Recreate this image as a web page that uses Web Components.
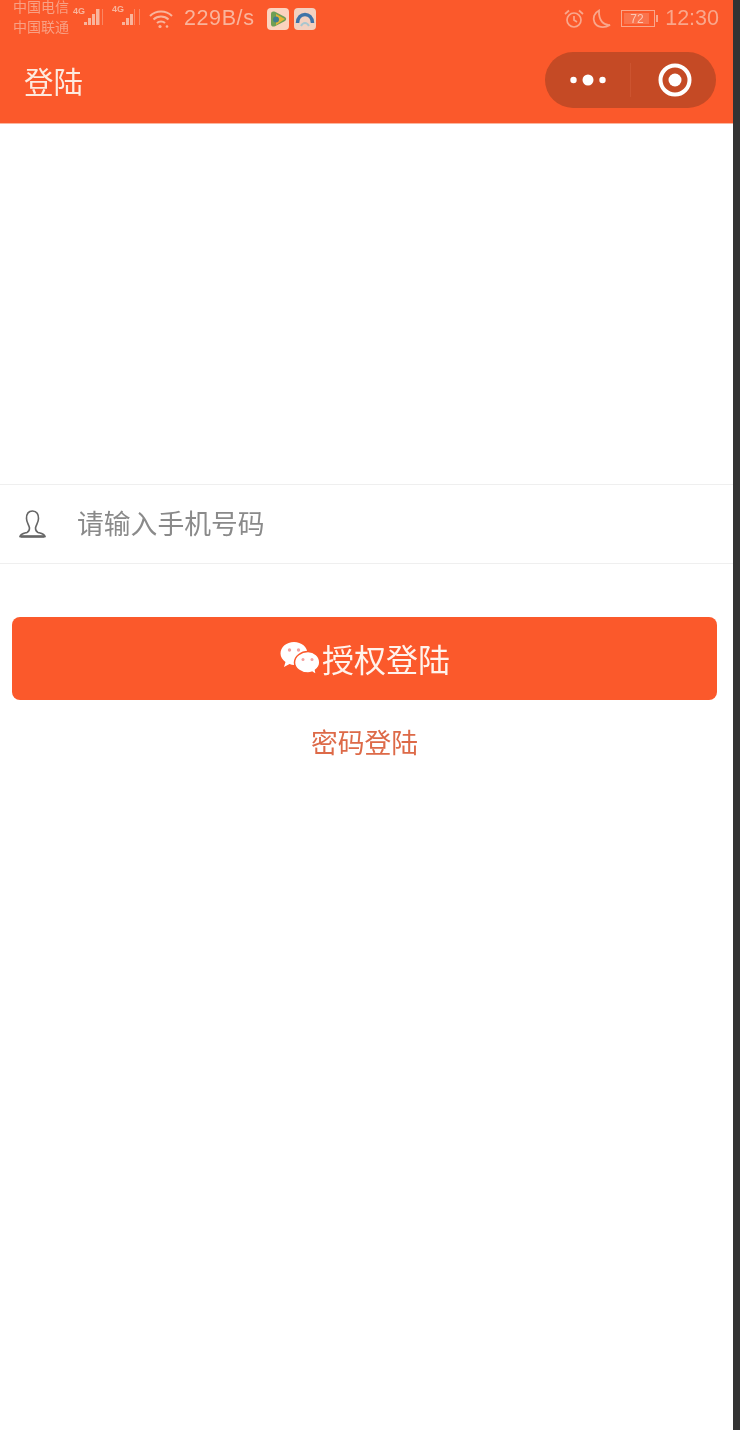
<!DOCTYPE html>
<html lang="zh">
<head>
<meta charset="utf-8">
<title>登陆</title>
<style>
    html, body {
        margin: 0;
        height: 100%;
        background: #ffffff;
        font-family: "Liberation Sans", "Noto Sans CJK SC", sans-serif;
    }
</style>
</head>
<body>
<login-page>
    <status-bar></status-bar>
    <nav-bar title="登陆"></nav-bar>
    <phone-field placeholder="请输入手机号码"></phone-field>
    <auth-button label="授权登陆"></auth-button>
    <text-link label="密码登陆"></text-link>
</login-page>

<script>
class LoginPage extends HTMLElement {
    constructor() {
        super();
        this.attachShadow({ mode: "open" });
        this.shadowRoot.innerHTML = `
        <style>
            :host {
                display: grid;
                grid-template-columns: 733px 7px;
                height: 1430px;
                overflow: hidden;
                font-family: "Liberation Sans", "Noto Sans CJK SC", sans-serif;
            }
            .screen {
                background: #ffffff;
                display: flex;
                flex-direction: column;
                filter: blur(0.5px);
            }
            .edge {
                background: #333333;
            }
        </style>
        <div class="screen"><slot></slot></div>
        <div class="edge"></div>
        `;
    }
}

class StatusBar extends HTMLElement {
    constructor() {
        super();
        this.attachShadow({ mode: "open" });
        this.shadowRoot.innerHTML = `
        <style>
            :host {
                display: flex;
                align-items: center;
                height: 37px;
                padding: 0 14px 0 13px;
                background: #fb592b;
                color: #f9b49c;
                overflow: hidden;
            }
            svg { display: block; flex: none; }
            .carrier {
                width: 56px;
                font-size: 14px;
                line-height: 20px;
                margin-top: -3px;
                color: #f8a084;
                filter: blur(0.5px);
                white-space: nowrap;
            }
            .signal { margin: -10px 0 0 3px; }
            .speed {
                font-size: 21.5px;
                letter-spacing: 0.6px;
                margin-left: 11px;
            }
            .apps { display: flex; gap: 5px; margin-left: 12px; }
            .right {
                margin-left: auto;
                display: flex;
                align-items: center;
            }
            .time { font-size: 21.5px; margin-left: 7px; color: #f9a78c; }
        </style>
        <div class="carrier">中国电信<br>中国联通</div>
        <svg class="signal" width="32" height="24" viewBox="0 0 32 24" fill="#f9b49c">
            <text x="1" y="12" font-size="9" font-weight="700" font-family="Liberation Sans">4G</text>
            <rect x="12" y="20" width="3" height="3"/><rect x="16" y="16" width="3" height="7"/><rect x="20" y="12" width="3" height="11"/><rect x="24" y="7" width="3.5" height="16"/>
            <rect x="30" y="7" width="1" height="16" opacity=".5"/>
        </svg>
        <svg class="signal" style="margin-left:7px" width="32" height="24" viewBox="0 0 32 24" fill="#f9b49c">
            <text x="1" y="10" font-size="9" font-weight="700" font-family="Liberation Sans">4G</text>
            <rect x="11" y="20" width="3" height="3"/><rect x="15" y="16" width="3" height="7"/><rect x="19" y="12" width="3" height="11"/><rect x="23" y="7" width="1" height="16" opacity=".5"/>
            <rect x="28" y="7" width="1" height="16" opacity=".5"/>
        </svg>
        <svg style="margin-left:6px" width="24" height="20" viewBox="0 0 24 20" fill="none" stroke="#f9b49c" stroke-width="2">
            <path d="M1 7 C7 1 17 1 23 7"/><path d="M4.5 10.5 C8.5 6.5 15.5 6.5 19.5 10.5"/><path d="M8 14 C10 12 14 12 16 14"/>
            <circle cx="11" cy="17.5" r="1.6" fill="#f9b49c" stroke="none"/>
            <circle cx="18" cy="17.5" r="1.3" fill="#f9b49c" stroke="none"/>
        </svg>
        <span class="speed">229B/s</span>
        <div class="apps">
            <svg width="22" height="22" viewBox="0 0 22 22">
                <rect width="22" height="22" rx="4" fill="#fbd3bf"/>
                <path d="M4 6 C4 3.5 6 3 8 3.8 L18 9 C19.6 10 19.6 12 18 13 L8 18.2 C6 19 4 18.5 4 16 Z" fill="#6f9f55"/>
                <path d="M9 6 L18 11 L9 17 Z" fill="#e6b536"/>
                <circle cx="9" cy="11.5" r="3" fill="#3f7f8f"/>
            </svg>
            <svg width="22" height="22" viewBox="0 0 22 22" fill="none">
                <rect width="22" height="22" rx="4" fill="#f3d0c0"/>
                <path d="M3.5 15 C4 3.5 18 3.5 18.5 15" stroke="#3f73a8" stroke-width="3.5"/>
                <path d="M7 18 C9 14 13 14 15 18" stroke="#a9c6cf" stroke-width="2"/>
            </svg>
        </div>
        <div class="right">
            <svg width="20" height="20" viewBox="0 0 20 20" fill="none" stroke="#f9a78c" stroke-width="1.7">
                <circle cx="10" cy="11" r="7"/><path d="M10 7 V11 L13 13"/><path d="M1 5 L5 1.5"/><path d="M19 5 L15 1.5"/>
            </svg>
            <svg style="margin-left:7px" width="20" height="20" viewBox="0 0 20 20" fill="none" stroke="#f9a78c" stroke-width="1.8">
                <path d="M8 1.5 C3 4 1.5 9 3.5 13.5 C6 18.5 13 19.5 19 16 C13 16.5 7.5 12 8 1.5 Z"/>
            </svg>
            <svg style="margin-left:10px" width="37" height="17" viewBox="0 0 37 17" fill="none">
                <rect x="0.5" y="0.5" width="33" height="16" stroke="#f9a78c"/>
                <rect x="3" y="3" width="25" height="11" fill="#f9a78c" opacity=".35"/>
                <rect x="35" y="5" width="2" height="7" fill="#f9a78c"/>
                <text x="16" y="13" font-size="12" fill="#fcc8b4" font-family="Liberation Sans" text-anchor="middle">72</text>
            </svg>
            <span class="time">12:30</span>
        </div>
        `;
    }
}

class NavBar extends HTMLElement {
    constructor() {
        super();
        this.attachShadow({ mode: "open" });
        this.shadowRoot.innerHTML = `
        <style>
            :host {
                display: flex;
                align-items: center;
                justify-content: space-between;
                height: 87px;
                box-sizing: border-box;
                padding: 0 17px 0 24px;
                background: #fb592b;
                border-bottom: 1px solid #fbb79f;
            }
            h1 {
                margin: 0;
                font-size: 29.5px;
                font-weight: 400;
                color: #fdeadf;
            }
            .capsule {
                width: 171px;
                height: 56px;
                border-radius: 28px;
                background: #c54a25;
                display: grid;
                grid-template-columns: 85px 1px 1fr;
                align-items: center;
                justify-items: center;
            }
            .line { width: 1px; height: 34px; background: #cc5430; }
            .ring { margin-left: 2px; }
            svg { display: block; }
        </style>
        <h1></h1>
        <div class="capsule">
            <svg width="36" height="12" viewBox="0 0 36 12" fill="#fff">
                <circle cx="3.5" cy="6" r="3.2"/><circle cx="18" cy="6" r="5.5"/><circle cx="32.5" cy="6" r="3.2"/>
            </svg>
            <div class="line"></div>
            <svg class="ring" width="34" height="34" viewBox="0 0 34 34" fill="none">
                <circle cx="17" cy="17" r="14.5" stroke="#fff" stroke-width="4"/>
                <circle cx="17" cy="17" r="6.5" fill="#fff"/>
            </svg>
        </div>
        `;
    }

    connectedCallback() {
        this.shadowRoot.querySelector("h1").textContent = this.getAttribute("title");
    }
}

class PhoneField extends HTMLElement {
    constructor() {
        super();
        this.attachShadow({ mode: "open" });
        this.shadowRoot.innerHTML = `
        <style>
            :host {
                display: flex;
                align-items: center;
                height: 80px;
                box-sizing: border-box;
                margin-top: 360px;
                padding-left: 19px;
                border-top: 1px solid #efefef;
                border-bottom: 1px solid #efefef;
            }
            svg { display: block; flex: none; }
            span {
                margin: 0 0 3px 31px;
                font-size: 26.8px;
                color: #8a8a8a;
                white-space: nowrap;
            }
        </style>
        <svg width="27" height="28" viewBox="0 0 27 28" fill="none" stroke="#666" stroke-width="1.6">
            <path d="M13.5 1 C9 1 7.5 4.5 7.5 8.5 C7.5 12.5 10 15 10.5 18 C10.5 20.5 10 21.5 8 22.5 C4.5 23.5 1.5 24 1 26.5 H26 C25.5 24 22.5 23.5 19 22.5 C17 21.5 16.5 20.5 16.5 18 C17 15 19.5 12.5 19.5 8.5 C19.5 4.5 18 1 13.5 1 Z"/>
            <path d="M1.5 26.5 H25.5" stroke-width="2.5"/>
        </svg>
        <span></span>
        `;
    }

    connectedCallback() {
        this.shadowRoot.querySelector("span").textContent = this.getAttribute("placeholder");
    }
}

class AuthButton extends HTMLElement {
    constructor() {
        super();
        this.attachShadow({ mode: "open" });
        this.shadowRoot.innerHTML = `
        <style>
            :host {
                display: flex;
                align-items: center;
                justify-content: center;
                height: 83px;
                margin: 53px 16px 0 12px;
                border-radius: 8px;
                background: #fb592b;
                color: #fff3ec;
                font-size: 32px;
            }
            svg { display: block; flex: none; margin: 0 2px 0 1px; }
            span { margin-top: -2px; }
        </style>
        <svg width="40" height="35" viewBox="0 0 40 35">
            <path d="M14 1 C6.5 1 0.5 6 0.5 12.5 C0.5 16 2.5 19 5.5 21 L4 26 L9.5 23 C11 23.5 12.5 24 14 24 C21.5 24 27.5 18.5 27.5 12.5 C27.5 6 21.5 1 14 1 Z" fill="#fff"/>
            <path d="M28 10.5 C21 10.5 14.5 15.5 14.5 21.5 C14.5 27.5 21 32 28 32 C29.5 32 30.5 31.8 32 31.2 L36.5 34 L35.5 29.2 C38 27.2 39.8 24.5 39.8 21.5 C39.8 15.5 34.5 10.5 28 10.5 Z" fill="#fff" stroke="#fb592b" stroke-width="1.5"/>
            <circle cx="9.5" cy="9" r="1.7" fill="#f3a0a0"/><circle cx="18.5" cy="9" r="1.7" fill="#f3a0a0"/>
            <circle cx="23" cy="18.5" r="1.5" fill="#f3a0a0"/><circle cx="32" cy="18.5" r="1.5" fill="#f3a0a0"/>
        </svg>
        <span></span>
        `;
    }

    connectedCallback() {
        this.shadowRoot.querySelector("span").textContent = this.getAttribute("label");
    }
}

class TextLink extends HTMLElement {
    constructor() {
        super();
        this.attachShadow({ mode: "open" });
        this.shadowRoot.innerHTML = `
        <style>
            :host {
                display: block;
                margin: 24px 4px 0 0;
                text-align: center;
                font-size: 26.8px;
                line-height: 40px;
                color: #dd6a48;
            }
        </style>
        <span></span>
        `;
    }

    connectedCallback() {
        this.shadowRoot.querySelector("span").textContent = this.getAttribute("label");
    }
}

customElements.define("login-page", LoginPage);
customElements.define("status-bar", StatusBar);
customElements.define("nav-bar", NavBar);
customElements.define("phone-field", PhoneField);
customElements.define("auth-button", AuthButton);
customElements.define("text-link", TextLink);
</script>
</body>
</html>
